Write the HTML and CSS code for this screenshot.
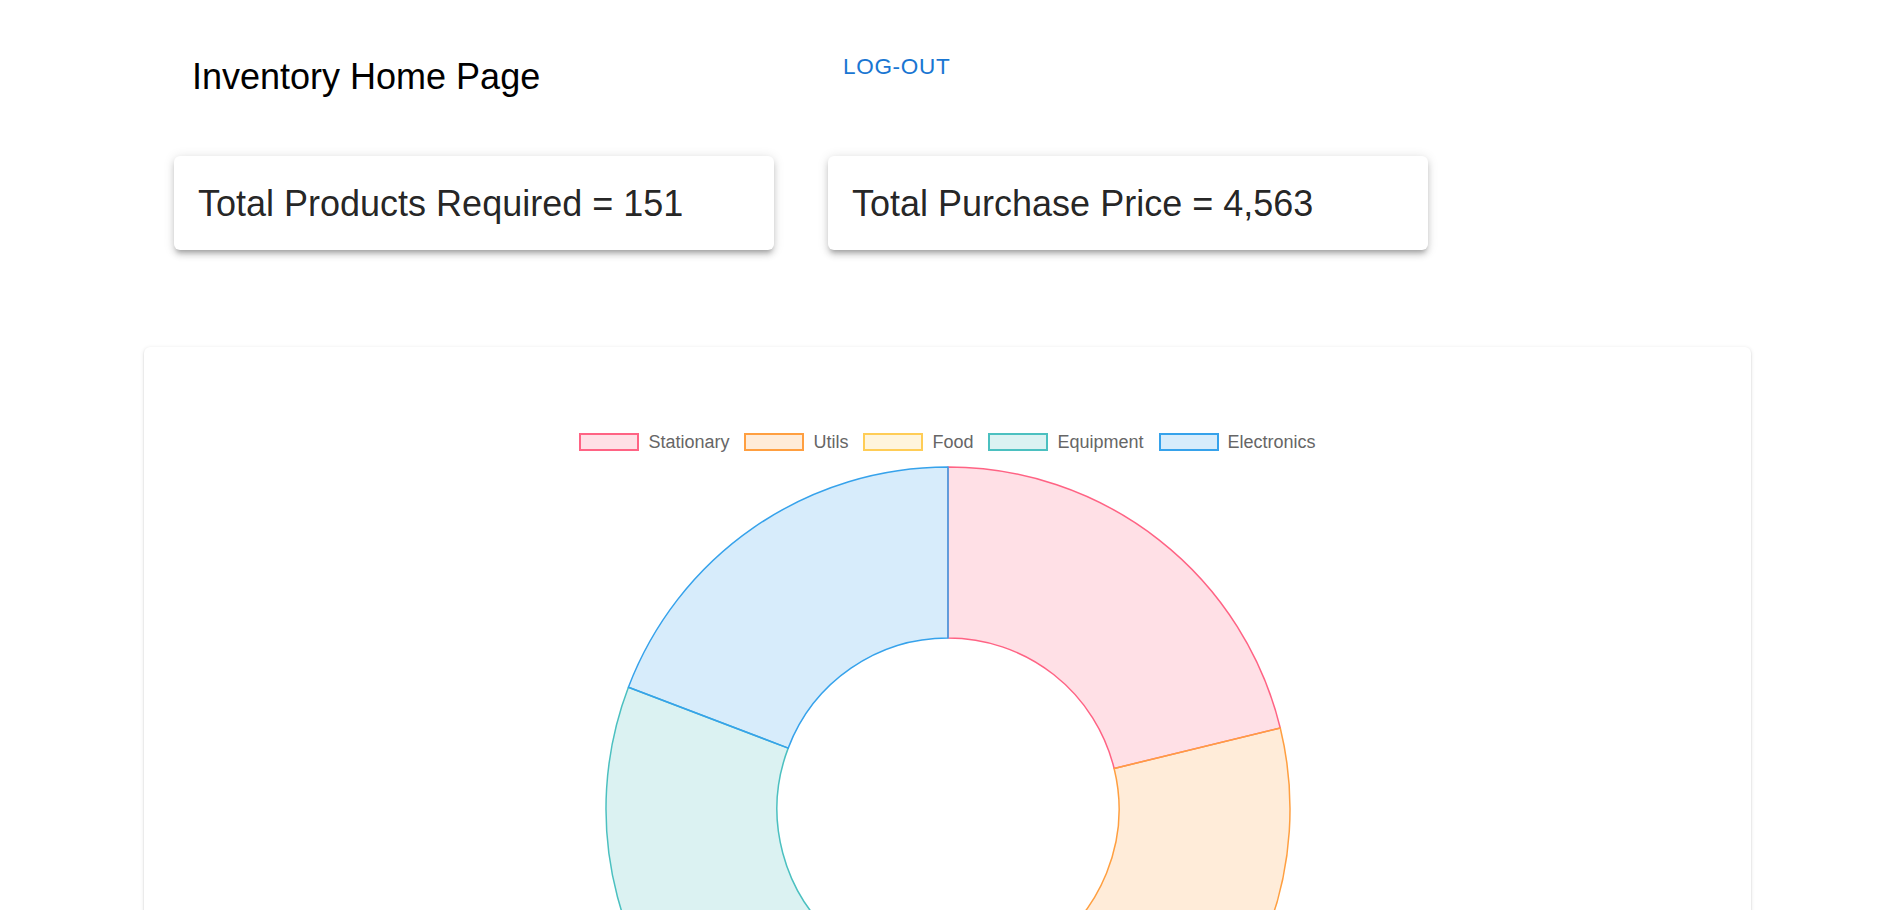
FILE: index.html
```html
<!DOCTYPE html>
<html lang="en">
<head>
<meta charset="utf-8">
<title>Inventory Home Page</title>
<link rel="stylesheet" href="styles.css">
</head>
<body>
<header class="header">
  <h1 class="title">Inventory Home Page</h1>
  <div class="logout-cell"><button class="logout">Log-out</button></div>
</header>
<section class="stats">
  <div class="card"><h5 class="card-text">Total Products Required = 151</h5></div>
  <div class="card"><h5 class="card-text">Total Purchase Price = 4,563</h5></div>
</section>
<section class="chart-card">
  <div class="legend">
    <div class="legend-item"><span class="swatch sw-pink"></span><span class="legend-label">Stationary</span></div>
    <div class="legend-item"><span class="swatch sw-orange"></span><span class="legend-label">Utils</span></div>
    <div class="legend-item"><span class="swatch sw-yellow"></span><span class="legend-label">Food</span></div>
    <div class="legend-item"><span class="swatch sw-teal"></span><span class="legend-label">Equipment</span></div>
    <div class="legend-item"><span class="swatch sw-blue"></span><span class="legend-label">Electronics</span></div>
  </div>
  <div class="chart-wrap">
    <svg class="donut" width="690" height="690" viewBox="0 0 690 690">
      <path class="seg seg-pink" d="M345,3 A342,342 0 0 1 677.26,263.95 L511.13,304.47 A171,171 0 0 0 345,174 Z"/>
      <path class="seg seg-orange" d="M677.26,263.95 A342,342 0 0 1 527.18,634.44 L436.09,489.72 A171,171 0 0 0 511.13,304.47 Z"/>
      <path class="seg seg-yellow" d="M527.18,634.44 A342,342 0 0 1 128.20,609.50 L236.60,477.25 A171,171 0 0 0 436.09,489.72 Z"/>
      <path class="seg seg-teal" d="M128.20,609.50 A342,342 0 0 1 25.41,223.22 L185.20,284.11 A171,171 0 0 0 236.60,477.25 Z"/>
      <path class="seg seg-blue" d="M25.41,223.22 A342,342 0 0 1 345,3 L345,174 A171,171 0 0 0 185.20,284.11 Z"/>
    </svg>
  </div>
</section>
</body>
</html>
```

FILE: styles.css
```css
* { box-sizing: border-box; }

html, body {
  margin: 0;
  padding: 0;
  background: #ffffff;
  font-family: "Liberation Sans", Arial, sans-serif;
}

.header {
  display: grid;
  grid-template-columns: 600px 600px;
  column-gap: 54px;
  padding: 35px 0 0 174px;
  align-items: start;
}

.title {
  margin: 18px 0 0 0;
  padding-left: 18px;
  font-size: 36px;
  line-height: 48px;
  font-weight: 400;
  color: #000000;
}

.logout {
  background: none;
  border: 0;
  padding: 12px 15px;
  font-family: "Liberation Sans", Arial, sans-serif;
  font-size: 22.5px;
  line-height: 1.75;
  font-weight: 400;
  letter-spacing: 0.7px;
  color: #1976d2;
  text-transform: uppercase;
  cursor: pointer;
}

.stats {
  display: flex;
  gap: 54px;
  padding-left: 174px;
  margin-top: 55px;
}

.card {
  width: 600px;
  background: #fff;
  border-radius: 6px;
  padding: 24px 24px 22px 24px;
  box-shadow: 0 4.5px 4.5px -3px rgba(0,0,0,0.2),
              0 4.5px 6px 0 rgba(0,0,0,0.14),
              0 1.5px 12px 0 rgba(0,0,0,0.12);
}

.card-text {
  margin: 0;
  font-size: 36px;
  line-height: 48px;
  font-weight: 400;
  color: rgba(0,0,0,0.87);
}

.chart-card {
  margin: 97px 0 0 144px;
  width: 1607px;
  height: 820px;
  background: #fff;
  border-radius: 6px;
  padding-top: 86px;
  box-shadow: 0 3px 1.5px -1.5px rgba(0,0,0,0.2),
              0 1.5px 1.5px 0 rgba(0,0,0,0.14),
              0 1.5px 4.5px 0 rgba(0,0,0,0.12);
}

.legend {
  display: flex;
  justify-content: center;
  gap: 15px;
  height: 18px;
}

.legend-item {
  display: flex;
  align-items: center;
  gap: 9px;
}

.swatch {
  width: 60px;
  height: 18px;
  border: 2px solid;
}

.legend-label {
  font-size: 18px;
  line-height: 18px;
  color: #666666;
}

.sw-pink { border-color: rgb(255,99,132); background: rgba(255,99,132,0.2); }
.sw-orange { border-color: rgb(255,159,64); background: rgba(255,159,64,0.2); }
.sw-yellow { border-color: rgb(255,205,86); background: rgba(255,205,86,0.2); }
.sw-teal { border-color: rgb(75,192,192); background: rgba(75,192,192,0.2); }
.sw-blue { border-color: rgb(54,162,235); background: rgba(54,162,235,0.2); }

.chart-wrap {
  display: flex;
  justify-content: center;
  margin-top: 13px;
}

.donut { overflow: visible; display: block; }

.seg { stroke-width: 1.5; stroke-linejoin: round; }
.seg-pink { fill: rgba(255,99,132,0.2); stroke: rgb(255,99,132); }
.seg-orange { fill: rgba(255,159,64,0.2); stroke: rgb(255,159,64); }
.seg-yellow { fill: rgba(255,205,86,0.2); stroke: rgb(255,205,86); }
.seg-teal { fill: rgba(75,192,192,0.2); stroke: rgb(75,192,192); }
.seg-blue { fill: rgba(54,162,235,0.2); stroke: rgb(54,162,235); }
```
